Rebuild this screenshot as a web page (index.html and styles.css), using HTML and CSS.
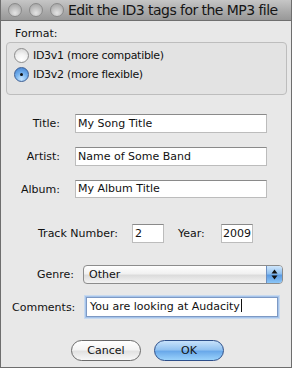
FILE: index.html
```html
<!DOCTYPE html>
<html lang="en">
<head>
    <meta charset="UTF-8">
    <meta name="viewport" content="width=device-width, initial-scale=1.0">
    <title>Edit the ID3 tags for the MP3 file</title>
    <link rel="stylesheet" href="styles.css">
</head>
<body>
    <div class="window">
        <div class="titlebar">
            <span class="light"></span>
            <span class="light"></span>
            <span class="light"></span>
            <span class="title">Edit the ID3 tags for the MP3 file</span>
        </div>
        <div class="content">
            <div class="format-label">Format:</div>
            <div class="group">
                <div class="radio-row"><span class="radio"></span>ID3v1 (more compatible)</div>
                <div class="radio-row"><span class="radio checked"></span>ID3v2 (more flexible)</div>
            </div>

            <div class="row row-title">
                <span class="label">Title:</span>
                <span class="field wide">My Song Title</span>
            </div>
            <div class="row row-artist">
                <span class="label">Artist:</span>
                <span class="field wide">Name of Some Band</span>
            </div>
            <div class="row row-album">
                <span class="label">Album:</span>
                <span class="field wide">My Album Title</span>
            </div>

            <div class="row row-track">
                <span class="track-label">Track Number:</span>
                <span class="field small">2</span>
                <span class="year-label">Year:</span>
                <span class="field small year">2009</span>
            </div>

            <div class="row row-genre">
                <span class="genre-label">Genre:</span>
                <div class="popup">
                    <span class="popup-text">Other</span>
                    <span class="popup-arrows">
                        <svg width="7" height="11" viewBox="0 0 7 11">
                            <path d="M3.5 0.5 L6.5 4.5 L0.5 4.5 Z" fill="#111"/>
                            <path d="M0.5 6.5 L6.5 6.5 L3.5 10.5 Z" fill="#111"/>
                        </svg>
                    </span>
                </div>
            </div>

            <div class="row row-comments">
                <span class="comments-label">Comments:</span>
                <span class="field focused">You are looking at Audacity<span class="caret"></span></span>
            </div>

            <div class="buttons">
                <button class="btn">Cancel</button>
                <button class="btn default">OK</button>
            </div>
        </div>
    </div>
</body>
</html>
```

FILE: styles.css
```css
body { margin: 0; padding: 0; background-color: #e8e8e8; font-family: "DejaVu Sans", sans-serif; font-size: 11px; color: #111; }
.window { width: 292px; height: 368px; box-sizing: border-box; border: 1px solid #6e6e6e; border-top: none; background-color: #e8e8e8; overflow: hidden; }

.titlebar { height: 21px; box-sizing: border-box; display: flex; align-items: center; padding-left: 7px; gap: 7px; background: linear-gradient(#c6c6c6, #a9a9a9 60%, #989898); border-bottom: 1px solid #6f6f6f; }
.light { width: 14px; height: 14px; border-radius: 50%; box-sizing: border-box; border: 1px solid #8a8a8a; background: radial-gradient(circle at 50% 75%, #e4e4e4, #bcbcbc 55%, #9d9d9d); }
.title { margin-left: -3px; font-size: 14px; color: #151515; letter-spacing: -0.55px; white-space: nowrap; }

.content { padding-top: 6px; }
.format-label { margin-left: 14px; height: 14px; line-height: 14px; }
.group { margin: 1px 4px 0 5px; height: 53px; box-sizing: border-box; border: 1px solid #bdbdbd; border-radius: 4px; background-color: #e3e3e3; padding: 3px 0 0 7px; }
.radio-row { display: flex; align-items: center; height: 19px; gap: 4px; letter-spacing: -0.3px; }
.radio { width: 15px; height: 15px; box-sizing: border-box; border-radius: 50%; border: 1px solid #8d8d8d; background: radial-gradient(circle at 50% 80%, #ffffff, #f2f2f2 45%, #cfcfcf); position: relative; }
.radio.checked { border-color: #3d5f95; background: radial-gradient(circle at 50% 85%, #c9e6ff, #77b3ee 45%, #3f7fd0); }
.radio.checked::after { content: ""; position: absolute; left: 5px; top: 5px; width: 3px; height: 3px; border-radius: 50%; background-color: #111; }

.row { display: flex; align-items: center; height: 19px; }
.label { width: 59px; text-align: right; margin-right: 15px; }
.field { box-sizing: border-box; height: 19px; line-height: 17px; background-color: #fff; border: 1px solid #bcbcbc; border-top-color: #8a8a8a; padding-left: 2px; white-space: nowrap; }
.field.wide { width: 192px; }
.row-title { margin-top: 19px; }
.row-artist { margin-top: 14px; }
.row-album { margin-top: 14px; height: 18px; }
.row-album .field { height: 18px; line-height: 16px; }

.row-track { margin-top: 26px; }
.track-label { margin-left: 37px; width: 94px; }
.field.small { width: 32px; }
.year-label { margin-left: 14px; width: 43px; }
.field.year { padding-left: 1px; }

.row-genre { margin-top: 22px; height: 19px; }
.genre-label { margin-left: 36px; width: 46px; }
.popup { width: 200px; height: 19px; box-sizing: border-box; display: flex; border: 1px solid #8c8c8c; border-radius: 4px; overflow: hidden; background: linear-gradient(#ffffff, #f1f1f1 45%, #dcdcdc 55%, #f3f3f3); }
.popup-text { flex: 1; padding-left: 5px; line-height: 17px; }
.popup-arrows { width: 15px; display: flex; align-items: center; justify-content: center; border-left: 1px solid #6d8fc0; background: linear-gradient(#cfe6fb, #8fc0f0 45%, #5b9be3 55%, #8cc6f7); }

.row-comments { margin-top: 13px; height: 20px; }
.comments-label { margin-left: 11px; width: 74px; }
.field.focused { width: 192px; height: 20px; line-height: 18px; padding-left: 3px; border-color: #7d99c4; box-shadow: 0 0 0 1px #a6c4ea, 0 0 0 2px #c7d9ef; }
.caret { display: inline-block; width: 1px; height: 13px; background-color: #111; vertical-align: -2px; margin-left: 1px; }

.buttons { display: flex; gap: 13px; margin-top: 23px; padding-left: 70px; }
.btn { width: 70px; height: 21px; border-radius: 11px; border: 1px solid #6a6a6a; font-family: "DejaVu Sans", sans-serif; font-size: 11px; color: #111; padding: 0; background: linear-gradient(#ffffff, #f4f4f4 45%, #e2e2e2 55%, #f7f7f7); }
.btn.default { border-color: #2d4f8a; background: linear-gradient(#c7e2fb, #93c3f1 45%, #6aa9ea 55%, #9ad2fb); }
```
